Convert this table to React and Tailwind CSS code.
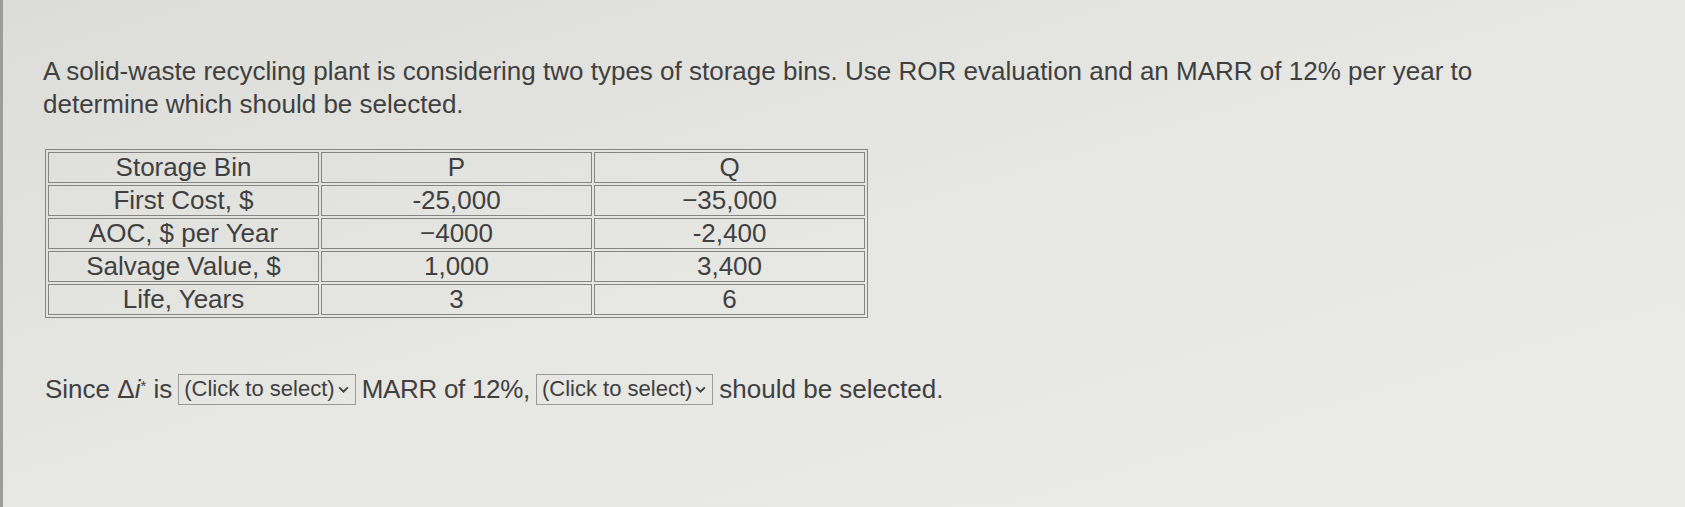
const rows = [
  ['Storage Bin', 'P', 'Q'],
  ['First Cost, $', '-25,000', '\u221235,000'],
  ['AOC, $ per Year', '\u22124000', '-2,400'],
  ['Salvage Value, $', '1,000', '3,400'],
  ['Life, Years', '3', '6'],
]

function Picker() {
  return (
    <span className="inline-flex items-center h-[31px] px-[5px] border border-[#9a9a9a] text-[22px] leading-none align-middle mx-[6px]">
      (Click to select)
      <svg className="w-[13px] h-[13px] ml-[2px]" viewBox="0 0 12 12" fill="none" stroke="currentColor" strokeWidth="1.8">
        <path d="M2 4l4 4 4-4" />
      </svg>
    </span>
  )
}

export default function App() {
  return (
    <div className="w-[1685px] h-[507px] overflow-hidden bg-gradient-to-br from-[#dcdcd9] via-[#e7e7e4] to-[#ebebe8] text-[#404040] font-['Liberation_Sans',Arial,sans-serif] border-l-[3px] border-[#9c9c9a] pl-[40px] pt-[55px]">
      <p className="text-[26px] leading-[33px] w-[1500px]">
        A solid-waste recycling plant is considering two types of storage bins. Use ROR evaluation and an MARR of 12% per year to
        <br />
        determine which should be selected.
      </p>

      <table className="mt-[28px] ml-[2px] border-separate border-spacing-[2px] border border-[#858585] text-[26px] leading-[29px] text-center">
        <tbody>
          {rows.map((r, i) => (
            <tr key={i}>
              {r.map((c, j) => (
                <td key={j} className="w-[271px] h-[31px] p-0 border border-[#858585]">
                  {c}
                </td>
              ))}
            </tr>
          ))}
        </tbody>
      </table>

      <div className="mt-[55px] ml-[2px] flex items-center text-[26px] leading-[32px]">
        <span>
          Since &Delta;<i>i</i><sup className="text-[15px]">*</sup> is
        </span>
        <Picker />
        <span className="tracking-[-0.3px]">MARR of 12%,</span>
        <Picker />
        <span>should be selected.</span>
      </div>
    </div>
  )
}
